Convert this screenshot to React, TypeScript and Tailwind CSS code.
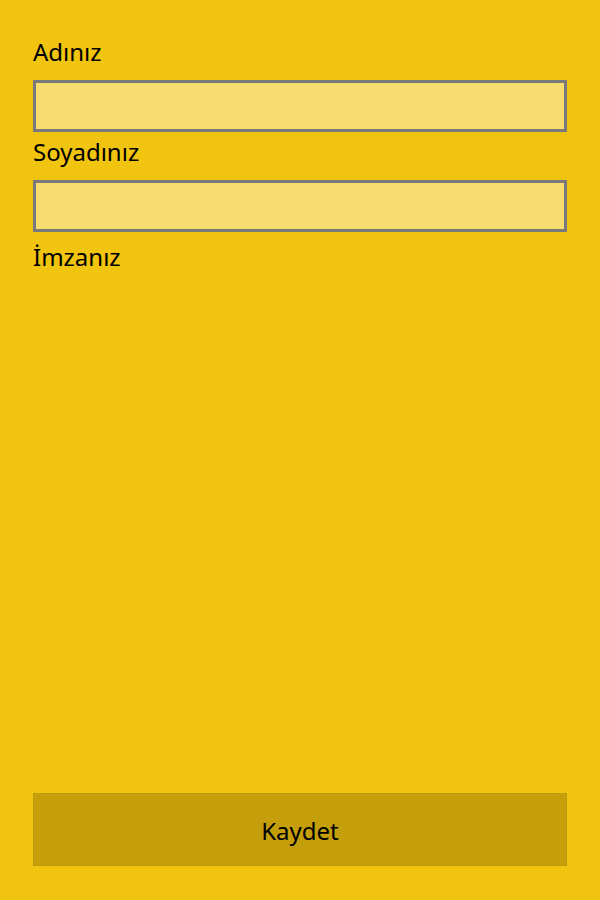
export default function App() {
  return (
    <div
      className="flex h-[900px] w-[600px] flex-col bg-[#f1c40f] px-[33px] pt-[32px] pb-[34px] text-black"
      style={{ fontFamily: '"Noto Sans", "Open Sans", sans-serif' }}
    >
      <label className="flex h-[48px] items-center pb-[8px] text-[24px] leading-none">Adınız</label>
      <input className="h-[52px] w-full border-[3px] border-[#7a7a7a] bg-[#f7dc6f] outline-none" />
      <label className="flex h-[48px] items-center pb-[8px] text-[24px] leading-none">Soyadınız</label>
      <input className="h-[52px] w-full border-[3px] border-[#7a7a7a] bg-[#f7dc6f] outline-none" />
      <label className="flex h-[56px] items-center pb-[6px] text-[24px] leading-none">İmzanız</label>
      <div className="flex-1" />
      <button className="flex h-[73px] w-full items-center justify-center border border-[#bd990b] bg-[#c49f0b] pt-[3px] text-[24px]">
        Kaydet
      </button>
    </div>
  );
}
